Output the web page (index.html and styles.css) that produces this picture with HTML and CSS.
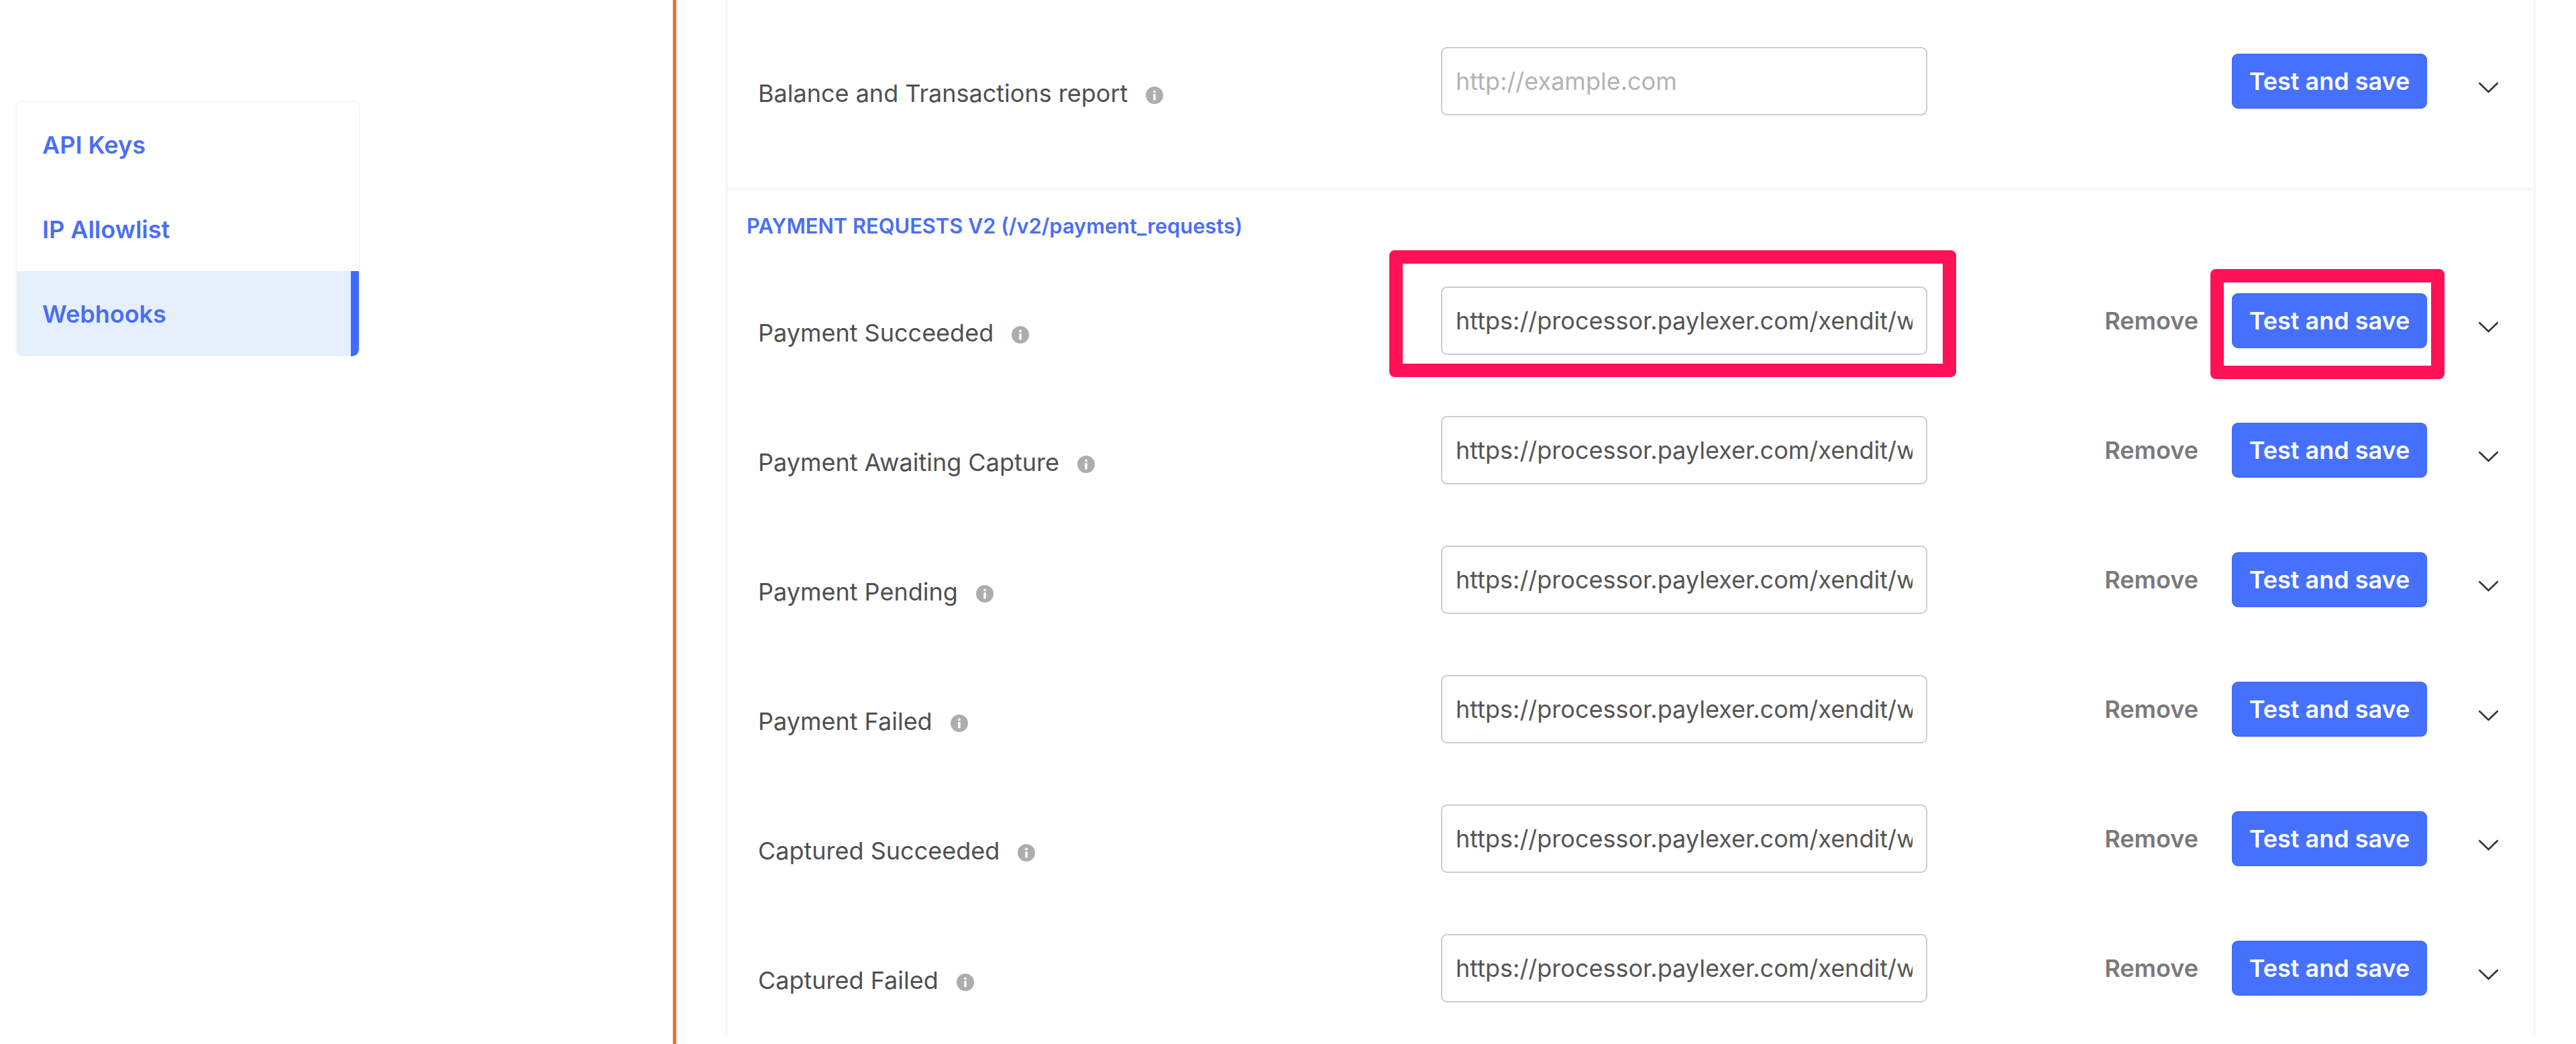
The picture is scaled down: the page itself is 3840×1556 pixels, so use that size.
FILE: index.html
```html
<!DOCTYPE html>
<html lang="en">
<head>
  <meta charset="UTF-8" />
  <meta name="viewport" content="width=device-width, initial-scale=1.0" />
  <title>Webhooks</title>
  <link rel="stylesheet" href="styles.css">
</head>
<body>
  <aside class="sidebar">
    <nav class="side-nav">
      <a class="side-link" href="#">API Keys</a>
      <a class="side-link" href="#">IP Allowlist</a>
      <a class="side-link active" href="#">Webhooks</a>
    </nav>
  </aside>

  <main class="content">
    <div class="card">
      <section class="group first">
        <div class="row">
          <div class="label"><span>Balance and Transactions report</span><svg class="info" viewBox="0 0 26 26"><circle cx="13" cy="13" r="13" /><rect x="11.2" y="11" width="3.6" height="9.5" rx="1" /><circle class="dot" cx="13" cy="7.5" r="2" /></svg></div>
          <div class="field"><input type="text" placeholder="http://example.com" /></div>
          <div class="actions">
            <div class="btn-wrap"><button class="btn">Test and save</button></div>
            <svg class="chev" viewBox="0 0 31 17"><polyline points="1.5,1.5 15.5,15 29.5,1.5" /></svg>
          </div>
        </div>
      </section>

      <section class="group">
        <h3 class="group-title">PAYMENT REQUESTS V2 (/v2/payment_requests)</h3>

        <div class="row">
          <div class="label"><span>Payment Succeeded</span><svg class="info" viewBox="0 0 26 26"><circle cx="13" cy="13" r="13" /><rect x="11.2" y="11" width="3.6" height="9.5" rx="1" /><circle class="dot" cx="13" cy="7.5" r="2" /></svg></div>
          <div class="field">
            <input type="text" value="https://processor.paylexer.com/xendit/webhook/payment_succeeded" />
            <div class="mark mark-input"></div>
          </div>
          <div class="actions">
            <a class="remove" href="#">Remove</a>
            <div class="btn-wrap">
              <button class="btn">Test and save</button>
              <div class="mark mark-btn"></div>
            </div>
            <svg class="chev" viewBox="0 0 31 17"><polyline points="1.5,1.5 15.5,15 29.5,1.5" /></svg>
          </div>
        </div>

        <div class="row">
          <div class="label"><span>Payment Awaiting Capture</span><svg class="info" viewBox="0 0 26 26"><circle cx="13" cy="13" r="13" /><rect x="11.2" y="11" width="3.6" height="9.5" rx="1" /><circle class="dot" cx="13" cy="7.5" r="2" /></svg></div>
          <div class="field"><input type="text" value="https://processor.paylexer.com/xendit/webhook/payment_awaiting_capture" /></div>
          <div class="actions">
            <a class="remove" href="#">Remove</a>
            <div class="btn-wrap"><button class="btn">Test and save</button></div>
            <svg class="chev" viewBox="0 0 31 17"><polyline points="1.5,1.5 15.5,15 29.5,1.5" /></svg>
          </div>
        </div>

        <div class="row">
          <div class="label"><span>Payment Pending</span><svg class="info" viewBox="0 0 26 26"><circle cx="13" cy="13" r="13" /><rect x="11.2" y="11" width="3.6" height="9.5" rx="1" /><circle class="dot" cx="13" cy="7.5" r="2" /></svg></div>
          <div class="field"><input type="text" value="https://processor.paylexer.com/xendit/webhook/payment_pending" /></div>
          <div class="actions">
            <a class="remove" href="#">Remove</a>
            <div class="btn-wrap"><button class="btn">Test and save</button></div>
            <svg class="chev" viewBox="0 0 31 17"><polyline points="1.5,1.5 15.5,15 29.5,1.5" /></svg>
          </div>
        </div>

        <div class="row">
          <div class="label"><span>Payment Failed</span><svg class="info" viewBox="0 0 26 26"><circle cx="13" cy="13" r="13" /><rect x="11.2" y="11" width="3.6" height="9.5" rx="1" /><circle class="dot" cx="13" cy="7.5" r="2" /></svg></div>
          <div class="field"><input type="text" value="https://processor.paylexer.com/xendit/webhook/payment_failed" /></div>
          <div class="actions">
            <a class="remove" href="#">Remove</a>
            <div class="btn-wrap"><button class="btn">Test and save</button></div>
            <svg class="chev" viewBox="0 0 31 17"><polyline points="1.5,1.5 15.5,15 29.5,1.5" /></svg>
          </div>
        </div>

        <div class="row">
          <div class="label"><span>Captured Succeeded</span><svg class="info" viewBox="0 0 26 26"><circle cx="13" cy="13" r="13" /><rect x="11.2" y="11" width="3.6" height="9.5" rx="1" /><circle class="dot" cx="13" cy="7.5" r="2" /></svg></div>
          <div class="field"><input type="text" value="https://processor.paylexer.com/xendit/webhook/captured_succeeded" /></div>
          <div class="actions">
            <a class="remove" href="#">Remove</a>
            <div class="btn-wrap"><button class="btn">Test and save</button></div>
            <svg class="chev" viewBox="0 0 31 17"><polyline points="1.5,1.5 15.5,15 29.5,1.5" /></svg>
          </div>
        </div>

        <div class="row">
          <div class="label"><span>Captured Failed</span><svg class="info" viewBox="0 0 26 26"><circle cx="13" cy="13" r="13" /><rect x="11.2" y="11" width="3.6" height="9.5" rx="1" /><circle class="dot" cx="13" cy="7.5" r="2" /></svg></div>
          <div class="field"><input type="text" value="https://processor.paylexer.com/xendit/webhook/captured_failed" /></div>
          <div class="actions">
            <a class="remove" href="#">Remove</a>
            <div class="btn-wrap"><button class="btn">Test and save</button></div>
            <svg class="chev" viewBox="0 0 31 17"><polyline points="1.5,1.5 15.5,15 29.5,1.5" /></svg>
          </div>
        </div>
      </section>
    </div>
  </main>
</body>
</html>
```

FILE: styles.css
```css
* { box-sizing: border-box; }
html, body { margin: 0; height: 1556px; overflow: hidden; }
body { display: flex; background: #fff; font-family: Inter, "Noto Sans", sans-serif; color: #555; }

/* left menu */
.sidebar { width: 1008px; flex: none; padding: 150px 0 0 23px; border-right: 5px solid #ff6a1f; }
.side-nav { width: 514px; display: flex; flex-direction: column; border: 2px solid #f5f5f5; border-bottom: 0; border-radius: 10px; overflow: hidden; }
.side-link { height: 126px; display: flex; align-items: center; padding: 2px 0 0 38px; font-size: 36px; font-weight: 600; color: #4a6ef5; text-decoration: none; }
.side-link.active { height: 127px; padding-top: 0; background: #e6f0fd; border-right: 12px solid #3d6bff; border-bottom-right-radius: 10px; }

/* main card */
.content { flex: 1; padding: 0 60px 0 73px; }
.card { border-left: 4px solid #f6f6f6; border-right: 4px solid #f6f6f6; }
.group.first { padding: 24.5px 0 62.5px; border-bottom: 4px solid #f6f6f6; }
.group-title { margin: 0; padding: 35px 0 26.5px 28px; line-height: 36px; font-size: 30.8px; font-weight: 600; color: #4a6ef5; }

.row { height: 193px; display: grid; grid-template-columns: 1018px 725px 1fr; align-items: center; padding-left: 45px; }
.label { display: flex; align-items: center; gap: 27px; margin-top: 36px; font-size: 36px; color: #4f4f4f; }
.info { width: 26px; height: 26px; margin-top: 6px; fill: #adadad; }
.info rect, .info .dot { fill: #fff; }

.field { position: relative; }
.field input { display: block; width: 100%; height: 102px; padding: 0 20px; border: 2px solid #ccc; border-radius: 9px; background: #fff; font: 36px Inter, "Noto Sans", sans-serif; color: #555; outline: none; }
.field input::placeholder { color: #b3b3b3; }

.actions { display: flex; justify-content: flex-end; align-items: center; padding-right: 51px; }
.remove { margin-right: 50px; font-size: 36px; font-weight: 600; color: #7a7a7a; text-decoration: none; }
.btn-wrap { position: relative; }
.btn { display: block; width: 291px; height: 82px; padding: 0; border: 2px solid #3f6bff; border-radius: 9px; background: #4671ff; color: #fff; font: 600 36px Inter, "Noto Sans", sans-serif; cursor: pointer; }
.chev { width: 31px; height: 17px; margin: 18px 0 0 76px; fill: none; stroke: #333; stroke-width: 2.6; }

/* red annotation boxes drawn on the screenshot */
.mark { position: absolute; border: 20px solid #ff1156; border-radius: 8px; pointer-events: none; }
.mark-input { top: -54px; bottom: -33px; left: -77px; right: -43px; }
.mark-btn { top: -36px; bottom: -46px; left: -32px; right: -26px; }
```
